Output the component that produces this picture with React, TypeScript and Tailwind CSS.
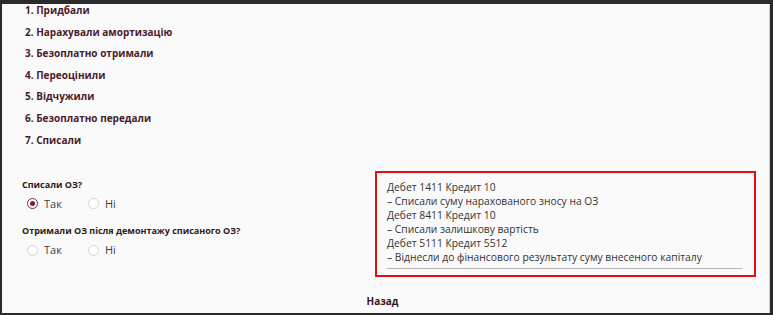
import React from 'react'

const steps = [
  '1. Придбали',
  '2. Нарахували амортизацію',
  '3. Безоплатно отримали',
  '4. Переоцінили',
  '5. Відчужили',
  '6. Безоплатно передали',
  '7. Списали',
]

const entries = [
  'Дебет 1411 Кредит 10',
  '– Списали суму нарахованого зносу на ОЗ',
  'Дебет 8411 Кредит 10',
  '– Списали залишкову вартість',
  'Дебет 5111 Кредит 5512',
  '– Віднесли до фінансового результату суму внесеного капіталу',
]

function Radio({ label, checked }: { label: string; checked?: boolean }) {
  return (
    <label className="flex items-center gap-[6px] w-[61px]">
      <span
        className={
          checked
            ? 'flex h-[11px] w-[11px] items-center justify-center rounded-full border border-[#7a2a3e] bg-white'
            : 'flex h-[11px] w-[11px] items-center justify-center rounded-full border border-[#d4d4d4] bg-white'
        }
      >
        {checked && <span className="h-[5px] w-[5px] rounded-full bg-[#7a1f35]" />}
      </span>
      <span className="text-[11px] text-[#4a3a3e]">{label}</span>
    </label>
  )
}

function Question({ title, answer }: { title: string; answer?: 'yes' | 'no' }) {
  return (
    <div className="flex flex-col gap-[4px]">
      <div className="text-[9px] font-bold leading-[14px] text-[#2b1a20]">{title}</div>
      <div className="flex pl-[5px]">
        <Radio label="Так" checked={answer === 'yes'} />
        <Radio label="Ні" checked={answer === 'no'} />
      </div>
    </div>
  )
}

export default function App() {
  return (
    <div
      className="h-[315px] w-[773px] overflow-hidden border-t-4 border-b-2 border-l-2 border-r-[3px] border-[#2a2a2a] bg-[#fafafa]"
      style={{ fontFamily: '"Open Sans", "Noto Sans", sans-serif' }}
    >
      <div className="flex h-full flex-col border-r border-[#cfcfcf]">
        {/* Steps */}
        <ul className="-mt-[1px] flex flex-col gap-[7.6px] pl-[23px]">
          {steps.map((s) => (
            <li key={s} className="text-[10px] font-bold leading-[14px] text-[#4b1a2b]">
              {s}
            </li>
          ))}
        </ul>

        <div className="mt-[24px] flex">
          {/* Questions */}
          <div className="flex w-[373px] flex-col gap-[12px] pl-[20px] pt-[7px]">
            <Question title="Списали ОЗ?" answer="yes" />
            <Question title="Отримали ОЗ після демонтажу списаного ОЗ?" />
          </div>

          {/* Result */}
          <div className="w-[381px] border-2 border-[#e10f0f] px-[10px] pt-[7px] pb-[6px]">
            {entries.map((e) => (
              <div key={e} className="text-[10.3px] leading-[14px] text-[#333]">
                {e}
              </div>
            ))}
            <div className="mt-[4px] mr-[2px] border-b border-[#b5b5b5]" />
          </div>
        </div>

        <div className="mt-[17px] flex justify-center">
          <span className="pr-[6px] text-[10px] font-bold text-[#3a1424]">Назад</span>
        </div>
      </div>
    </div>
  )
}
